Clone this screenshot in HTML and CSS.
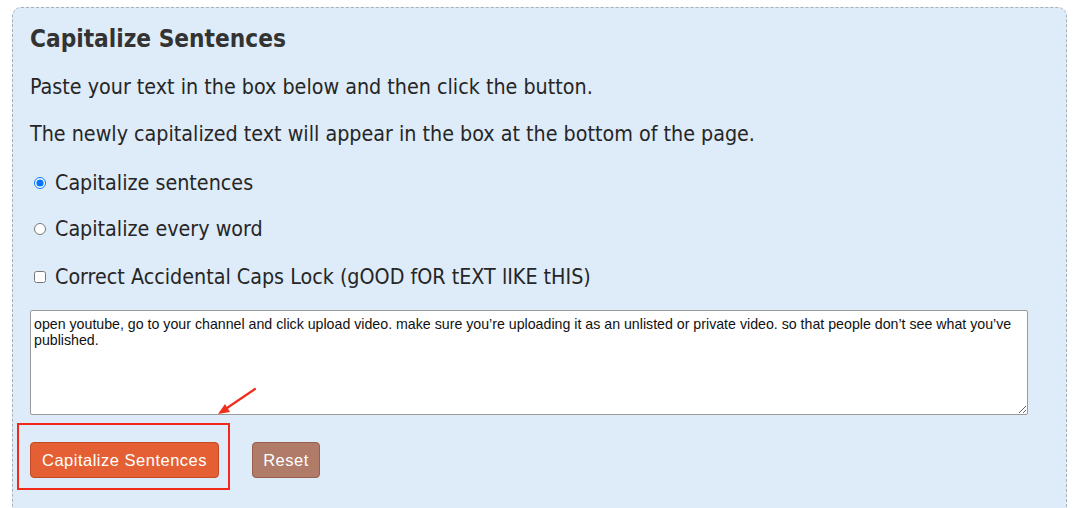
FILE: index.html
```html
<!DOCTYPE html>
<html>
<head>
<meta charset="utf-8">
<link rel="stylesheet" href="styles.css">
</head>
<body>
<div class="page">
  <div class="panel">
    <h1 class="title">Capitalize Sentences</h1>
    <p class="lead">Paste your text in the box below and then click the button.</p>
    <p class="lead">The newly capitalized text will appear in the box at the bottom of the page.</p>
    <label class="option"><input type="radio" name="mode" checked><span>Capitalize sentences</span></label>
    <label class="option"><input type="radio" name="mode"><span>Capitalize every word</span></label>
    <label class="option"><input type="checkbox"><span>Correct Accidental Caps Lock (gOOD fOR tEXT lIKE tHIS)</span></label>
    <textarea class="input">open youtube, go to your channel and click upload video. make sure you’re uploading it as an unlisted or private video. so that people don’t see what you’ve published.</textarea>
    <div class="actions">
      <button class="btn btn-primary">Capitalize Sentences</button>
      <button class="btn btn-reset">Reset</button>
    </div>
  </div>
  <div class="highlight"></div>
  <svg class="arrow" width="60" height="40" viewBox="0 0 60 40">
    <line x1="53" y1="3" x2="22" y2="24" stroke="#f0301c" stroke-width="2.2" stroke-linecap="round"/>
    <polygon points="16,28 23,18 28,26" fill="#f0301c"/>
  </svg>
</div>
</body>
</html>
```
FILE: styles.css
```css
html, body {
  margin: 0;
  padding: 0;
  background: #ffffff;
}
.page {
  position: relative;
  padding: 7px 13px 0 12px;
  height: 508px;
  box-sizing: border-box;
  overflow: hidden;
}
.panel {
  background: #deebf9;
  border: 1px dashed #a9b0b8;
  border-radius: 9px;
  padding: 15px 17px 40px 17px;
  font-family: "DejaVu Sans Condensed", "DejaVu Sans", sans-serif;
  color: #262626;
  display: flex;
  flex-direction: column;
  align-items: flex-start;
}
.title {
  margin: 0;
  font-size: 24.2px;
  line-height: 32px;
  font-weight: bold;
  color: #333;
}
.lead {
  margin: 18px 0 0 0;
  font-size: 21.3px;
  line-height: 28px;
}
.lead + .lead {
  margin-top: 19px;
}
.option {
  display: flex;
  align-items: center;
  margin-top: 21px;
  font-size: 21.3px;
  line-height: 28px;
}
.option + .option {
  margin-top: 18px;
}
.option + .option + .option {
  margin-top: 20px;
}
.option input {
  margin: 0 9px 0 4px;
  width: 12px;
  height: 12px;
}
.input {
  margin-top: 19px;
  width: 998px;
  height: 105px;
  box-sizing: border-box;
  border: 1px solid #9a9a9a;
  border-radius: 2px;
  background: #fff;
  padding: 5px 3px;
  font-family: "Liberation Sans", Arial, sans-serif;
  font-size: 14.2px;
  line-height: 16px;
  color: #111;
  resize: both;
}
.actions {
  display: flex;
  gap: 33px;
  margin-top: 27px;
}
.btn {
  height: 36px;
  border-radius: 4px;
  font-family: "Liberation Sans", Arial, sans-serif;
  font-size: 16.5px;
  letter-spacing: 0.5px;
  color: #fff;
  padding: 0 8px;
  cursor: pointer;
}
.btn-primary {
  width: 189px;
  background: #e45f33;
  border: 1px solid #c24a26;
}
.btn-reset {
  width: 68px;
  background: #b07b68;
  border: 1px solid #985f4b;
}
.highlight {
  position: absolute;
  left: 17px;
  top: 423px;
  width: 209px;
  height: 63px;
  border: 2px solid #f0291a;
}
.arrow {
  position: absolute;
  left: 202px;
  top: 386px;
}
```
